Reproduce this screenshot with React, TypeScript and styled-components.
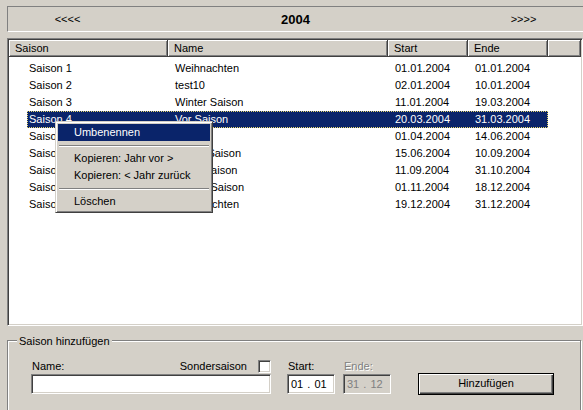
import React from "react";
import styled, { createGlobalStyle, css } from "styled-components";

const Global = createGlobalStyle`
  html, body { margin: 0; padding: 0; }
  body {
    background: #d4d0c8;
    font-family: "Liberation Sans", Arial, sans-serif;
    font-size: 11px;
    color: #000;
    overflow: hidden;
  }
  #root { width: 583px; height: 410px; overflow: hidden; }
`;

const Page = styled.div`
  width: 583px;
  height: 410px;
  padding: 6px 0 0 7px;
  box-sizing: border-box;
  display: flex;
  flex-direction: column;
  overflow: hidden;
  & > * { flex-shrink: 0; }
`;

const YearBar = styled.div`
  height: 26px;
  width: 580px;
  box-sizing: border-box;
  border-top: 1px solid #808080;
  border-left: 1px solid #808080;
  border-bottom: 1px solid #fff;
  display: grid;
  grid-template-columns: 119px 1fr 119px;
  align-items: center;
  padding-right: 4px;
`;

const NavButton = styled.div`
  text-align: center;
  font-size: 11px;
`;

const Year = styled.div`
  text-align: center;
  font-weight: bold;
  font-size: 13px;
`;

const ListBox = styled.div`
  position: relative;
  margin-top: 6px;
  width: 576px;
  height: 288px;
  box-sizing: border-box;
  border-top: 1px solid #808080;
  border-left: 1px solid #808080;
  border-right: 1px solid #fff;
  border-bottom: 1px solid #fff;
  box-shadow: inset 1px 1px 0 #404040, inset -1px -1px 0 #d4d0c8;
  background: #fff;
  padding: 1px;
`;

const Header = styled.div`
  display: grid;
  grid-template-columns: 159px 220px 80px 80px 1fr;
  height: 17px;
  background: #d4d0c8;
`;

const HeadCell = styled.div`
  box-sizing: border-box;
  padding-left: 6px;
  line-height: 16px;
  box-shadow: inset 1px 1px 0 #fff, inset -1px -1px 0 #808080;
  border-right: 1px solid #404040;
  border-bottom: 1px solid #404040;
  white-space: nowrap;
  overflow: hidden;
`;

const Body = styled.div`
  padding-top: 3px;
`;

const Row = styled.div`
  display: grid;
  grid-template-columns: 18px 141px 220px 80px 80px;
  height: 17px;
`;

const Cells = styled.div<{ $selected?: boolean }>`
  grid-column: 2 / 6;
  display: grid;
  grid-template-columns: 141px 220px 80px 80px;
  line-height: 15px;
  box-sizing: border-box;
  border: 1px solid transparent;
  ${(p) =>
    p.$selected &&
    css`
      background: #0a246a;
      color: #fff;
      border: 1px dotted #e8d870;
    `}
`;

const Cell = styled.div<{ $first?: boolean }>`
  padding-left: ${(p) => (p.$first ? "1px" : "6px")};
  white-space: nowrap;
  overflow: hidden;
`;

const Menu = styled.div`
  position: absolute;
  left: 47px;
  top: 82px;
  width: 158px;
  box-sizing: border-box;
  background: #d4d0c8;
  border-top: 1px solid #d4d0c8;
  border-left: 1px solid #d4d0c8;
  border-right: 1px solid #404040;
  border-bottom: 1px solid #404040;
  box-shadow: inset 1px 1px 0 #fff, inset -1px -1px 0 #808080;
  padding: 2px;
  z-index: 2;
`;

const MenuItem = styled.div<{ $active?: boolean }>`
  height: 17px;
  line-height: 17px;
  padding-left: 16px;
  white-space: nowrap;
  ${(p) =>
    p.$active &&
    css`
      background: #0a246a;
      color: #fff;
    `}
`;

const Separator = styled.div`
  height: 9px;
  display: flex;
  align-items: center;
  padding: 0 1px;
  &::before {
    content: "";
    flex: 1;
    height: 0;
    border-top: 1px solid #808080;
    border-bottom: 1px solid #fff;
  }
`;

const Group = styled.div`
  position: relative;
  margin-top: 14px;
  width: 574px;
  height: 80px;
  box-sizing: border-box;
  border: 1px solid #808080;
  box-shadow: inset 1px 1px 0 #fff, 1px 1px 0 #fff;
  padding: 18px 0 0 23px;
`;

const Legend = styled.div`
  position: absolute;
  top: -7px;
  left: 9px;
  padding: 0 2px;
  background: #d4d0c8;
  line-height: 14px;
`;

const FormGrid = styled.div`
  display: grid;
  grid-template-columns: 240px 16px 48px 8px 48px 27px 136px;
  grid-template-rows: 14px 22px;
  row-gap: 0px;
  align-items: end;
`;

const Slot = styled.div<{ $col: number }>`
  grid-column: ${(p) => p.$col};
  display: flex;
  flex-direction: column;
  justify-content: flex-end;
`;

const NameLabelRow = styled.div`
  display: flex;
  justify-content: space-between;
  align-items: center;
  height: 14px;
`;

const Label = styled.span<{ $disabled?: boolean }>`
  display: block;
  height: 14px;
  line-height: 14px;
  padding-left: 1px;
  color: ${(p) => (p.$disabled ? "#808080" : "#000")};
  ${(p) =>
    p.$disabled &&
    css`
      text-shadow: 1px 1px 0 #fff;
    `}
`;

const CheckWrap = styled.span`
  display: flex;
  align-items: center;
  gap: 11px;
`;

const CheckBox = styled.span`
  width: 13px;
  height: 13px;
  box-sizing: border-box;
  background: #fff;
  border-top: 1px solid #808080;
  border-left: 1px solid #808080;
  border-right: 1px solid #fff;
  border-bottom: 1px solid #fff;
  box-shadow: inset 1px 1px 0 #404040, inset -1px -1px 0 #d4d0c8;
`;

const Field = styled.div<{ $disabled?: boolean }>`
  height: 20px;
  box-sizing: border-box;
  background: ${(p) => (p.$disabled ? "#d4d0c8" : "#fff")};
  color: ${(p) => (p.$disabled ? "#808080" : "#000")};
  border-top: 1px solid #808080;
  border-left: 1px solid #808080;
  border-right: 1px solid #fff;
  border-bottom: 1px solid #fff;
  box-shadow: inset 1px 1px 0 #404040, inset -1px -1px 0 #d4d0c8;
  padding-left: 3px;
  line-height: 18px;
  white-space: pre;
  word-spacing: 1px;
  margin-bottom: 1px;
`;

const Button = styled.div`
  height: 22px;
  box-sizing: border-box;
  border: 1px solid #000;
  background: #d4d0c8;
  box-shadow: inset 1px 1px 0 #fff, inset -1px -1px 0 #404040,
    inset -2px -2px 0 #808080;
  text-align: center;
  line-height: 19px;
`;

const rows = [
  ["Saison 1", "Weihnachten", "01.01.2004", "01.01.2004"],
  ["Saison 2", "test10", "02.01.2004", "10.01.2004"],
  ["Saison 3", "Winter Saison", "11.01.2004", "19.03.2004"],
  ["Saison 4", "Vor Saison", "20.03.2004", "31.03.2004"],
  ["Saison 5", "Ostern", "01.04.2004", "14.06.2004"],
  ["Saison 6", "Haupt Saison", "15.06.2004", "10.09.2004"],
  ["Saison 7", "Nach Saison", "11.09.2004", "31.10.2004"],
  ["Saison 8", "Herbst Saison", "01.11.2004", "18.12.2004"],
  ["Saison 9", "Weihnachten", "19.12.2004", "31.12.2004"],
];

export default function App() {
  return (
    <>
      <Global />
      <Page>
        <YearBar>
          <NavButton>&lt;&lt;&lt;&lt;</NavButton>
          <Year>2004</Year>
          <NavButton>&gt;&gt;&gt;&gt;</NavButton>
        </YearBar>
        <ListBox>
          <Header>
            <HeadCell>Saison</HeadCell>
            <HeadCell>Name</HeadCell>
            <HeadCell>Start</HeadCell>
            <HeadCell>Ende</HeadCell>
            <HeadCell />
          </Header>
          <Body>
            {rows.map((r, i) => (
              <Row key={i}>
                <Cells $selected={i === 3}>
                  <Cell $first>{r[0]}</Cell>
                  <Cell>{r[1]}</Cell>
                  <Cell>{r[2]}</Cell>
                  <Cell>{r[3]}</Cell>
                </Cells>
              </Row>
            ))}
          </Body>
          <Menu>
            <MenuItem $active>Umbenennen</MenuItem>
            <Separator />
            <MenuItem>Kopieren: Jahr vor &gt;</MenuItem>
            <MenuItem>Kopieren: &lt; Jahr zurück</MenuItem>
            <Separator />
            <MenuItem>Löschen</MenuItem>
          </Menu>
        </ListBox>
        <Group>
          <Legend>Saison hinzufügen</Legend>
          <FormGrid>
            <Slot $col={1}>
              <NameLabelRow>
                <Label>Name:</Label>
                <CheckWrap>
                  <Label>Sondersaison</Label>
                  <CheckBox />
                </CheckWrap>
              </NameLabelRow>
            </Slot>
            <Slot $col={3}>
              <Label>Start:</Label>
            </Slot>
            <Slot $col={5}>
              <Label $disabled>Ende:</Label>
            </Slot>
            <Slot $col={1}>
              <Field />
            </Slot>
            <Slot $col={3}>
              <Field>{"01 . 01"}</Field>
            </Slot>
            <Slot $col={5}>
              <Field $disabled>{"31 . 12"}</Field>
            </Slot>
            <Slot $col={7}>
              <Button>Hinzufügen</Button>
            </Slot>
          </FormGrid>
        </Group>
      </Page>
    </>
  );
}
